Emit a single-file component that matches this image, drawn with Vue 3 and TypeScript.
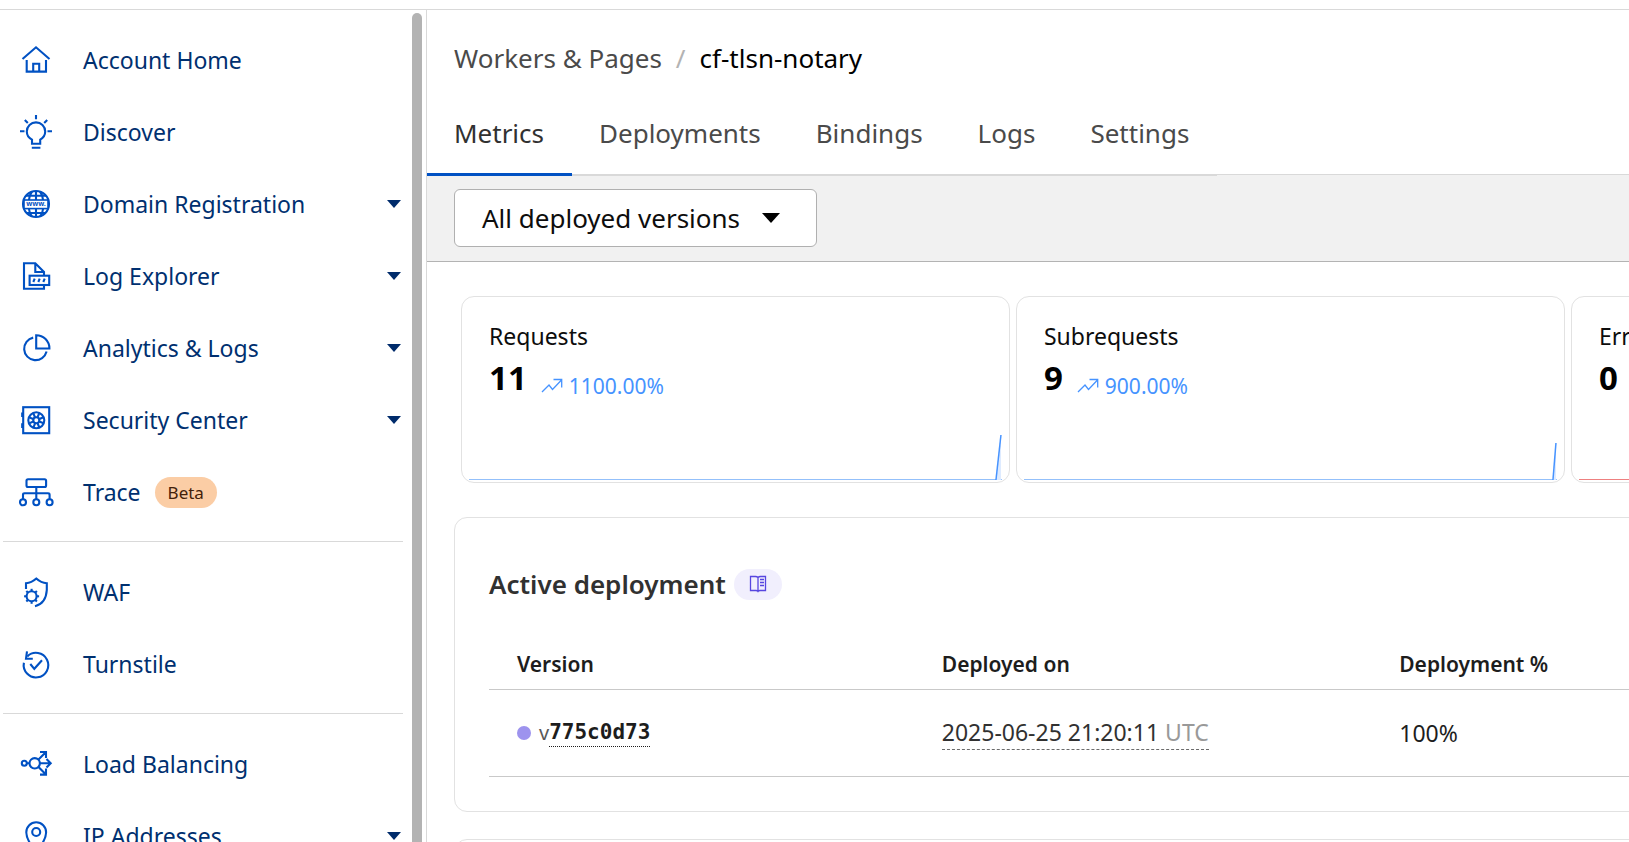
<script setup lang="ts">
type IconName =
  | 'home' | 'bulb' | 'globe' | 'log' | 'pie' | 'safe'
  | 'trace' | 'waf' | 'turnstile' | 'balance' | 'pin'

interface NavItem {
  label: string
  icon: IconName
  expandable?: boolean
  badge?: string
}

interface Metric {
  label: string
  value: string
  change?: string
  tone: 'blue' | 'red'
  spark: string
  area?: string
}

const navGroups: NavItem[][] = [
  [
    { label: 'Account Home', icon: 'home' },
    { label: 'Discover', icon: 'bulb' },
    { label: 'Domain Registration', icon: 'globe', expandable: true },
    { label: 'Log Explorer', icon: 'log', expandable: true },
    { label: 'Analytics & Logs', icon: 'pie', expandable: true },
    { label: 'Security Center', icon: 'safe', expandable: true },
    { label: 'Trace', icon: 'trace', badge: 'Beta' },
  ],
  [
    { label: 'WAF', icon: 'waf' },
    { label: 'Turnstile', icon: 'turnstile' },
  ],
  [
    { label: 'Load Balancing', icon: 'balance' },
    { label: 'IP Addresses', icon: 'pin', expandable: true },
  ],
]

const tabs: string[] = ['Metrics', 'Deployments', 'Bindings', 'Logs', 'Settings']

const metrics: Metric[] = [
  { label: 'Requests', value: '11', change: '1100.00%', tone: 'blue', spark: 'M527 49L532 4', area: 'M527 49L532 4V49Z' },
  { label: 'Subrequests', value: '9', change: '900.00%', tone: 'blue', spark: 'M529 49L532 12', area: 'M529 49L532 12V49Z' },
  { label: 'Errors', value: '0', tone: 'red', spark: '' },
]

const spokes: number[] = [0, 45, 90, 135, 180, 225, 270, 315]
</script>

<template>
  <div class="page">
    <header class="topbar"></header>
    <div class="shell">
      <aside class="sidebar">
        <nav class="nav" aria-label="Account">
          <ul v-for="(group, g) in navGroups" :key="g" class="group">
            <li v-for="item in group" :key="item.label">
              <a href="#" class="nav-item">
                <svg class="nav-icon" viewBox="0 0 36 36" aria-hidden="true">
                  <template v-if="item.icon === 'home'">
                    <path d="M4.5 17L18 5.3L31.5 17M8.7 18V29.6H28V18M15.2 29.6V21.8H21.2V29.6" />
                  </template>
                  <template v-else-if="item.icon === 'bulb'">
                    <path d="M18 1V5.2M2 17.3H6.5M29.5 17.3H34M6.8 6L9.8 9M29.2 6L26.2 9M13.8 33.8H22.4" />
                    <path d="M14 29.8V25.6C10.8 24 8.8 21 8.8 17.6A9.2 9.2 0 0 1 27.2 17.6C27.2 21 25.2 24 22.2 25.6V29.8Z" />
                  </template>
                  <template v-else-if="item.icon === 'globe'">
                    <circle cx="18" cy="18" r="13" />
                    <path d="M18 5V14M18 23V31M14 5.5Q11.3 9 11 14M22 5.5Q24.7 9 25 14M11 23Q11.3 27.5 14 30.5M25 23Q24.7 27.5 22 30.5M8 9.8H28M8 27H28" />
                    <rect class="band" x="6" y="14" width="24" height="8.6" />
                    <text x="18" y="20" text-anchor="middle">www.</text>
                  </template>
                  <template v-else-if="item.icon === 'log'">
                    <path d="M26 17.7V14L17.3 5.2H6V30.8H26V27M17.3 5.2V14H26" />
                    <rect x="11.6" y="17.7" width="19.6" height="9.3" />
                    <path d="M16.7 20.7L15.3 24M21.7 20.7L20.3 24M26.7 20.7L25.3 24" />
                  </template>
                  <template v-else-if="item.icon === 'pie'">
                    <path d="M18.2 5.2V18.5H31.4A13.2 13.2 0 0 0 18.2 5.2ZM15.2 7.6A11.4 11.4 0 1 0 28.6 21.6" />
                  </template>
                  <template v-else-if="item.icon === 'safe'">
                    <rect x="5.2" y="5.2" width="26" height="26" />
                    <path d="M4.2 10.5V15M4.2 21.3V26" />
                    <circle cx="18.3" cy="18.3" r="8" />
                    <circle cx="18.3" cy="18.3" r="3" />
                    <path v-for="a in spokes" :key="a" d="M18.3 15V10.5" :transform="`rotate(${a + 22} 18.3 18.3)`" />
                  </template>
                  <template v-else-if="item.icon === 'trace'">
                    <rect x="8.5" y="5.2" width="19.6" height="7.8" rx="1.5" />
                    <path d="M18.3 13V25M5 25V20.7Q5 19.3 6.5 19.3H30Q31.6 19.3 31.6 20.7V25" />
                    <circle cx="5" cy="28.3" r="3" />
                    <circle cx="18.3" cy="28.3" r="3" />
                    <circle cx="31.6" cy="28.3" r="3" />
                  </template>
                  <template v-else-if="item.icon === 'waf'">
                    <path d="M8 15V9.3Q13.5 9 18.3 4.6Q23 9 28.8 9.3V16Q28 29.5 17 32.2" />
                    <circle cx="13.6" cy="22.3" r="5" />
                    <path v-for="a in spokes" :key="a" d="M13.6 17V14.8" :transform="`rotate(${a} 13.6 22.3)`" />
                  </template>
                  <template v-else-if="item.icon === 'turnstile'">
                    <path d="M5.9 16.8A12.3 12.3 0 1 0 9.3 10.4" />
                    <path d="M9 5.3L8 12.8H14.8M12.3 18L16.3 22.8L24 14.3" />
                  </template>
                  <template v-else-if="item.icon === 'balance'">
                    <circle cx="6.3" cy="17.3" r="2.5" />
                    <circle cx="16.7" cy="17.3" r="5.2" />
                    <path d="M8.8 17.3H11.5M20.5 13.6L28 6M22 6H28V12M20.5 21L28 28.6M22 28.6H28V22.6M22 17.3H32.5M28.5 13L32.7 17.3L28.5 21.6" />
                  </template>
                  <template v-else>
                    <path d="M18.2 34Q8.3 22 8.3 14.2A9.9 9.9 0 0 1 28.1 14.2Q28.1 22 18.2 34Z" />
                    <circle cx="18.2" cy="14" r="4" />
                  </template>
                </svg>
                <span class="nav-label">{{ item.label }}</span>
                <span v-if="item.badge" class="badge">{{ item.badge }}</span>
                <svg v-if="item.expandable" class="caret" viewBox="0 0 14 8" aria-hidden="true">
                  <path d="M0 0H14L7 8Z" />
                </svg>
              </a>
            </li>
          </ul>
        </nav>
        <div class="scroll-track"><div class="scroll-thumb"></div></div>
      </aside>

      <main class="main">
        <nav class="crumbs" aria-label="Breadcrumb">
          <a href="#" class="crumb">Workers &amp; Pages</a>
          <span class="slash">/</span>
          <span class="crumb current">cf-tlsn-notary</span>
        </nav>

        <div class="tab-row">
          <nav class="tabs" aria-label="Sections">
            <a v-for="(tab, i) in tabs" :key="tab" href="#" class="tab" :class="{ active: i === 0 }">{{ tab }}</a>
          </nav>
        </div>

        <section class="filter">
          <button type="button" class="picker">
            All deployed versions
            <svg class="picker-caret" viewBox="0 0 18 10" aria-hidden="true"><path d="M0 0H18L9 10Z" /></svg>
          </button>
        </section>

        <section class="metrics">
          <article v-for="m in metrics" :key="m.label" class="card" :class="m.tone">
            <h3 class="card-label">{{ m.label }}</h3>
            <div class="card-figures">
              <strong class="card-value">{{ m.value }}</strong>
              <span v-if="m.change" class="change">
                <svg class="trend" viewBox="0 0 22 16" aria-hidden="true">
                  <path d="M1 14L8 7L11.5 11.5L20.5 2M12.5 1.5H20.7V9.5" />
                </svg>
                {{ m.change }}
              </span>
            </div>
            <svg class="spark" viewBox="0 0 533 50" preserveAspectRatio="none" aria-hidden="true">
              <path class="base" d="M0 48.5H533" />
              <path v-if="m.area" class="area" :d="m.area" />
              <path v-if="m.spark" class="rise" :d="m.spark" />
            </svg>
          </article>
        </section>

        <section class="panel">
          <div class="panel-head">
            <h2 class="panel-title">Active deployment</h2>
            <a href="#" class="docs" aria-label="Documentation">
              <svg class="book" viewBox="0 0 18 18" aria-hidden="true">
                <path d="M9 2.5Q8 1.5 6.5 1.5H1.5V15.5H7Q8.4 15.5 9 16.5Q9.6 15.5 11 15.5H16.5V1.5H11.5Q10 1.5 9 2.5ZM9 2.5V16.5M11 4.5H15M11 7.5H15M11 10.5H15" />
              </svg>
            </a>
          </div>
          <table class="table">
            <colgroup><col class="col-version" /><col class="col-date" /><col /></colgroup>
            <thead>
              <tr><th>Version</th><th>Deployed on</th><th>Deployment %</th></tr>
            </thead>
            <tbody>
              <tr>
                <td>
                  <div class="version"><span class="dot"></span><span class="vee">v</span><a href="#" class="hash">775c0d73</a></div>
                </td>
                <td><time class="stamp" datetime="2025-06-25T21:20:11Z">2025-06-25 21:20:11 <span class="zone">UTC</span></time></td>
                <td>100%</td>
              </tr>
            </tbody>
          </table>
        </section>
        <section class="panel"></section>
      </main>
    </div>
  </div>
</template>

<style>
html,
body {
  margin: 0;
  background: #fff;
}
</style>

<style scoped>
.page {
  display: flex;
  flex-direction: column;
  height: 100vh;
  overflow: hidden;
  font-family: "Noto Sans", "Open Sans", sans-serif;
  color: #1d1d1d;
}
.page * {
  box-sizing: border-box;
}
a {
  color: inherit;
  text-decoration: none;
}
.topbar {
  flex: none;
  height: 10px;
  border-bottom: 1px solid #d9d9d9;
}
.shell {
  display: flex;
  flex: 1;
  min-height: 0;
}
.sidebar {
  display: flex;
  flex: none;
  width: 427px;
  border-right: 1px solid #d9d9d9;
}
.nav {
  flex: 1;
  padding: 14px 9px 0 3px;
  overflow: hidden;
}
.group {
  margin: 0;
  padding: 0;
  list-style: none;
}
.group + .group {
  margin-top: 13px;
  padding-top: 14px;
  border-top: 1px solid #d9d9d9;
}
.nav-item {
  display: flex;
  align-items: center;
  height: 72px;
  padding: 0 2px 0 15px;
  color: #003070;
  font-size: 23px;
}
.nav-icon {
  flex: none;
  width: 36px;
  height: 36px;
  margin-right: 29px;
  fill: none;
  stroke: #0051c3;
  stroke-width: 2.1;
}
.nav-icon text {
  fill: #0051c3;
  stroke: none;
  font-size: 7px;
  font-weight: 700;
}
.nav-icon .band {
  fill: #fff;
  stroke-width: 1.6;
}
.badge {
  margin-left: 14px;
  padding: 0 13px;
  border-radius: 16px;
  background: #fbcda5;
  color: #43210a;
  font-size: 17px;
  line-height: 31px;
}
.caret {
  width: 14px;
  height: 8px;
  margin-left: auto;
  fill: #002b6b;
}
.scroll-track {
  flex: none;
  width: 14px;
  padding-top: 3px;
}
.scroll-thumb {
  width: 10px;
  height: 100%;
  border-radius: 5px 5px 0 0;
  background: #b3b3b3;
}
.main {
  flex: 1;
  min-width: 0;
  overflow: hidden;
}
.crumbs {
  display: flex;
  padding: 28px 27px 0;
  font-size: 26px;
  line-height: 40px;
  color: #4a4a4a;
}
.slash {
  margin: 0 14px;
  color: #b3b3b3;
}
.current {
  color: #000;
}
.tab-row {
  display: flex;
  height: 97px;
  border-bottom: 1px solid #d9d9d9;
}
.tabs {
  display: flex;
  height: 98px;
}
.tab {
  padding: 35px 28px 0 27px;
  border-bottom: 2px solid #d9d9d9;
  color: #4a4a4a;
  font-size: 26px;
  line-height: 40px;
}
.tab.active {
  border-bottom: 3px solid #0051c3;
  color: #313131;
}
.filter {
  padding: 14px 27px;
  border-bottom: 1px solid #b3b3b3;
  background: #f1f1f1;
}
.picker {
  display: flex;
  align-items: center;
  gap: 22px;
  height: 58px;
  padding: 0 36px 0 27px;
  border: 1px solid #b0b0b0;
  border-radius: 6px;
  background: #fff;
  color: #0d0d0d;
  font-family: inherit;
  font-size: 26px;
}
.picker-caret {
  width: 18px;
  height: 10px;
}
.metrics {
  display: flex;
  gap: 6px;
  padding: 34px 0 0 34px;
}
.card {
  display: flex;
  flex: 0 0 47%;
  flex-direction: column;
  height: 187px;
  padding: 23px 7px 1px;
  border: 1px solid #e2e2e2;
  border-radius: 13px;
}
.card-label {
  margin: 0;
  padding-left: 20px;
  color: #0d0d0d;
  font-size: 23px;
  font-weight: 400;
  line-height: 32px;
}
.card-figures {
  display: flex;
  align-items: center;
  padding-left: 20px;
}
.card-value {
  color: #000;
  font-size: 33px;
  line-height: 52px;
}
.change {
  display: flex;
  align-items: center;
  gap: 6px;
  margin-left: 14px;
  padding-top: 15px;
  color: #4693ff;
  font-size: 21px;
}
.trend {
  width: 22px;
  height: 16px;
  fill: none;
  stroke: #4693ff;
  stroke-width: 1.3;
}
.spark {
  width: 100%;
  height: 50px;
  margin-top: auto;
  fill: none;
}
.spark path {
  vector-effect: non-scaling-stroke;
}
.spark .base {
  stroke: #93c0fb;
}
.red .base {
  stroke: #ee8080;
}
.spark .area {
  fill: #dceaff;
}
.spark .rise {
  stroke: #4693ff;
  stroke-width: 1.5;
}
.panel {
  min-height: 120px;
  margin: 27px -28px 0 27px;
  padding: 0 0 34px 34px;
  border: 1px solid #e2e2e2;
  border-radius: 13px;
}
.metrics + .panel {
  margin-top: 34px;
}
.panel-head {
  display: flex;
  align-items: center;
  gap: 8px;
  padding-top: 46px;
}
.panel-title {
  margin: 0;
  color: #313131;
  font-size: 26px;
  font-weight: 600;
  line-height: 40px;
}
.docs {
  display: grid;
  place-items: center;
  width: 48px;
  height: 31px;
  border-radius: 16px;
  background: #f1effd;
}
.book {
  width: 18px;
  height: 18px;
  fill: none;
  stroke: #5746e0;
  stroke-width: 1.3;
}
.table {
  width: 100%;
  margin-top: 36px;
  border-collapse: collapse;
  table-layout: fixed;
}
.col-version {
  width: 36.4%;
}
.col-date {
  width: 39.2%;
}
th,
td {
  padding: 0 0 0 28px;
  border-bottom: 1px solid #c9c9c9;
  text-align: left;
}
th {
  height: 49px;
  font-size: 21px;
  font-weight: 600;
}
td {
  height: 87px;
  font-size: 23px;
}
.version {
  display: flex;
  align-items: center;
}
.dot {
  width: 14px;
  height: 14px;
  margin-right: 8px;
  border-radius: 50%;
  background: #9d93ee;
}
.vee {
  color: #595959;
  font-size: 20px;
}
.hash {
  border-bottom: 1px dotted #1d1d1d;
  font-family: "DejaVu Sans Mono", monospace;
  font-size: 21px;
  font-weight: 700;
  line-height: 28px;
}
.stamp {
  display: inline-block;
  border-bottom: 1px dashed #6b6b6b;
  color: #313131;
  line-height: 34px;
}
.zone {
  color: #999;
}
</style>
